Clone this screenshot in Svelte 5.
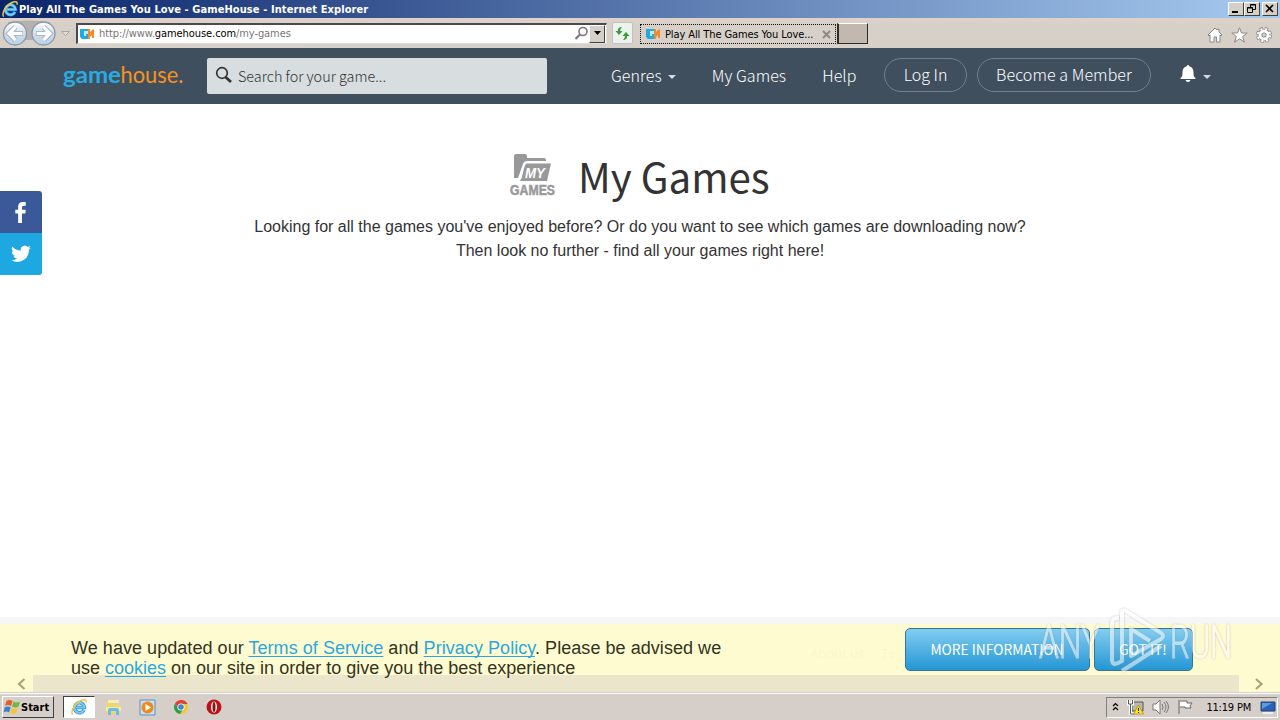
<script lang="ts">
  const address = { scheme: "http://www.", host: "gamehouse.com", path: "/my-games" };
  const navLinks = [
    { label: "Genres", menu: true },
    { label: "My Games", menu: false },
    { label: "Help", menu: false },
  ];
</script>

{#snippet ieLogo(size: number)}
  <svg width={size} height={size} viewBox="0 0 18 18">
    <path d="M14 12A5 5 0 1 1 14.500 9.500H6" fill="none" stroke="#2f83d0" stroke-width="3.400" />
    <path d="M14 12A5 5 0 1 1 14.500 9.500H6" fill="none" stroke="#74cdf7" stroke-width="2" />
    <path d="M3 16.400C0 15.500 3.500 6.500 10 3c4-2.200 7-1.800 6 1.800" fill="none" stroke="#f0c63c" stroke-width="1.500" />
  </svg>
{/snippet}

{#snippet siteIcon()}
  <svg width="14" height="12" viewBox="0 0 14 12">
    <path d="M0 1h8v2H4v5h2V6h2v5H2l-2-2z" fill="#25a9dc" />
    <path d="M8 1h2v3l2-2 2-1v9h-2V7l-2 2v2H8z" fill="#f28b2c" />
    <path d="M4 3h4v3H6v2H4z" fill="#bceaf8" />
  </svg>
{/snippet}

<div class="screen">
  <div class="title-bar">
    {@render ieLogo(18)}
    <span class="window-title">Play All The Games You Love - GameHouse - Internet Explorer</span>
    <div class="window-buttons">
      <span class="win-btn"><svg width="14" height="12"><path d="M3 9h6" stroke="#000" stroke-width="2" /></svg></span>
      <span class="win-btn restore"><svg width="14" height="12"><path d="M5.500 4V1.500h5v5H8M5 2h6M2.500 4.500h5v5h-5zM2 5h6" fill="none" stroke="#000" /></svg></span>
      <span class="win-btn"><svg width="14" height="12"><path d="m3 2 7 7M10 2 3 9" stroke="#000" stroke-width="1.600" /></svg></span>
    </div>
  </div>

  <div class="toolbar">
    <svg class="history" width="74" height="30" viewBox="0 0 74 30">
      <defs>
        <linearGradient id="orb" x2="0" y2="1">
          <stop offset="0" stop-color="#fff" />
          <stop offset=".5" stop-color="#d5dde7" />
          <stop offset="1" stop-color="#b4d3e8" />
        </linearGradient>
      </defs>
      <path d="M8 4Q29 1 50 4L44 22H14z" fill="#b4b0ad" />
      <circle cx="15" cy="15.500" r="11.500" fill="url(#orb)" stroke="#8898a8" stroke-width="1.300" />
      <circle cx="43.500" cy="15.500" r="11.500" fill="url(#orb)" stroke="#8898a8" stroke-width="1.300" />
      <path d="M23 15.500H9M15.500 9 9 15.500l6.500 6.500" fill="none" stroke="#91a6bd" stroke-width="5" />
      <path d="M22.500 15.500H9M15.500 9 9 15.500l6.500 6.500" fill="none" stroke="#fff" stroke-width="3.400" />
      <path d="M36 15.500h14M43.500 9l6.500 6.500-6.500 6.500" fill="none" stroke="#91a6bd" stroke-width="5" />
      <path d="M36.500 15.500h13M43.500 9l6.500 6.500-6.500 6.500" fill="none" stroke="#fff" stroke-width="3.400" />
      <path d="M61.500 13.500h8l-4 4z" fill="#e2dfda" stroke="#aaa69f" />
    </svg>
    <div class="address">
      {@render siteIcon()}
      <span class="url">{address.scheme}<b>{address.host}</b>{address.path}</span>
      <svg width="15" height="15" viewBox="0 0 15 15"><circle cx="9" cy="5.500" r="4" fill="none" stroke="#777" stroke-width="1.600" /><path d="M6 8.500 1.500 13" stroke="#777" stroke-width="2.200" /></svg>
      <span class="drop"><svg width="9" height="5"><path d="M1 0h7L4.500 4z" /></svg></span>
    </div>
    <span class="refresh">
      <svg width="15" height="15" viewBox="0 0 15 15">
        <path d="M7 1Q2.500 1 3 5H.5L4 9l3.500-4H5Q5 3 7 1M8 14q4.500 0 4-4h2.500L11 6l-3.500 4H10q0 2-2 4" fill="#379a38" />
      </svg>
    </span>
    <div class="tab">
      {@render siteIcon()}
      <span class="tab-title">Play All The Games You Love...</span>
      <svg width="9" height="9"><path d="m1 1 7 7M8 1 1 8" stroke="#8b8884" stroke-width="1.900" /></svg>
    </div>
    <span class="new-tab"></span>
    <div class="tools">
      <svg width="16" height="16" viewBox="0 0 16 16"><path d="M8 1 1 8l1 1 1-1v7h4v-5h2.500v5H13V8l1 1 1-1-3-3V2h-2v1z" fill="#fff" stroke="#8c8a86" /></svg>
      <svg width="17" height="16" viewBox="0 0 17 16"><path d="m8.500.8 2 5.200h5.700l-4.500 3.500 1.700 5.700-4.900-3.400-4.900 3.400 1.700-5.700L.8 6h5.700z" fill="#fff" stroke="#8c8a86" /></svg>
      <svg width="16" height="16" viewBox="0 0 16 16">
        <circle cx="8" cy="8" r="6.200" fill="none" stroke="#8c8a86" stroke-width="3.600" stroke-dasharray="3.100 1.770" />
        <circle cx="8" cy="8" r="4" fill="none" stroke="#8c8a86" stroke-width="4.600" />
        <circle cx="8" cy="8" r="5.900" fill="none" stroke="#fff" stroke-width="2.600" stroke-dasharray="1.900 2.734" stroke-dashoffset="-.5" />
        <circle cx="8" cy="8" r="4" fill="none" stroke="#fff" stroke-width="2.800" />
      </svg>
    </div>
  </div>

  <header class="site-header">
    <svg class="brand" width="124" height="34" viewBox="0 0 124 34">
      <text y="25" textLength="58" lengthAdjust="spacingAndGlyphs" class="game">game</text>
      <text x="57.500" y="25" textLength="63" lengthAdjust="spacingAndGlyphs" class="house">house.</text>
    </svg>
    <div class="search">
      <svg width="18" height="18" viewBox="0 0 18 18"><circle cx="7" cy="7" r="5.300" fill="none" stroke="#333" stroke-width="1.700" /><path d="m10.500 11 5.500 5" stroke="#333" stroke-width="2.800" /></svg>
      <span>Search for your game...</span>
    </div>
    <nav>
      {#each navLinks as link}
        <a class="nav-link" href="#top">{link.label}{#if link.menu}<i class="caret"></i>{/if}</a>
      {/each}
    </nav>
    <span class="pill login">Log In</span>
    <span class="pill member">Become a Member</span>
    <div class="bell">
      <svg width="16" height="18" viewBox="0 0 16 18"><path d="M8 0q1 0 1.200 1.200C12 2 13.500 4 13.500 7c0 4 .5 5 2 6v1H.5v-1c1.500-1 2-2 2-6 0-3 1.500-5 4.300-5.800Q7 0 8 0M5.500 15h5q-.5 2-2.500 2t-2.500-2" fill="#fff" /></svg>
      <i class="caret"></i>
    </div>
  </header>

  <main>
    <div class="heading">
      <svg width="48" height="44" viewBox="0 0 48 44">
        <path d="M4 2q0-2 2-2h9q2 0 2 2v2h17q2 0 2 3H17q-3 0-4 3L8 24H4z" fill="#999" />
        <path d="M17 9.500h24L37 27H10q2-3 3-8 1.500-9.500 4-9.500" fill="#999" />
        <text x="15" y="24" textLength="20" lengthAdjust="spacingAndGlyphs" class="folder-label">MY</text>
        <text x="0" y="40.500" textLength="45" lengthAdjust="spacingAndGlyphs" class="folder-caption">GAMES</text>
      </svg>
      <h1>My Games</h1>
    </div>
    <p>Looking for all the games you've enjoyed before? Or do you want to see which games are downloading now?<br />Then look no further - find all your games right here!</p>

    <div class="share">
      <span class="facebook"><svg width="12" height="21" viewBox="0 0 12 22"><path d="M3 22V12H0V8h3V5q0-5 5-5h3v4H9Q7 4 7 6v2h4l-.5 4H7v10z" fill="#fff" /></svg></span>
      <span class="twitter"><svg width="20" height="18" viewBox="0 0 24 20"><path d="M24 2.400a10 10 0 0 1-2.800.8A5 5 0 0 0 23.300.5a10 10 0 0 1-3.100 1.200A4.900 4.900 0 0 0 11.700 6 14 14 0 0 1 1.700.9a4.900 4.900 0 0 0 1.500 6.600A5 5 0 0 1 1 6.900a5 5 0 0 0 4 4.900 5 5 0 0 1-2.300.1 5 5 0 0 0 4.600 3.400A10 10 0 0 1 0 17.300 14 14 0 0 0 21.500 4.800 10 10 0 0 0 24 2.400" fill="#fff" /></svg></span>
    </div>
  </main>

  <div class="footer-edge"></div>
  <div class="cookie-bar">
    <div class="scrollbar">
      <svg width="10" height="12"><path d="M8.500 1 3 6l5.500 5" fill="none" stroke="#a7a477" stroke-width="2.200" /></svg>
      <span class="thumb"></span>
      <svg width="10" height="12"><path d="m2 1 5.500 5L2 11" fill="none" stroke="#a7a477" stroke-width="2.200" /></svg>
    </div>
    <div class="notice">
      <span class="lead">We have updated our <a href="#terms">Terms of Service</a> and <a href="#privacy">Privacy Policy</a>. Please be advised we</span><br />
      use <a href="#cookies">cookies</a> on our site in order to give you the best experience
    </div>
    <span class="faded-link">About us</span>
    <span class="faded-link">Te</span>
    <div class="actions">
      <button class="info">MORE INFORMATION</button>
      <button class="accept">GOT IT!</button>
    </div>
  </div>

  <svg class="watermark" width="204" height="76" viewBox="0 0 204 76">
    <text x="3" y="55" textLength="61" lengthAdjust="spacingAndGlyphs">ANY</text>
    <path d="M83 15h-2q-5 0-5 5v36q0 7 6 4l4-2V10q0-4 4-2l35 22q4 3 0 6L95 53V26l19 12" />
    <path d="M86 68l39-25" />
    <text x="134" y="55" textLength="62" lengthAdjust="spacingAndGlyphs">RUN</text>
  </svg>

  <div class="taskbar">
    <div class="start">
      <svg width="18" height="16" viewBox="0 0 17 16">
        <path d="M3 2q3-2 6 0L7.500 7q-3-2-6 0z" fill="#e45d2d" />
        <path d="M10 2.500q3 2 6.500 0L15 7.500q-3 2-6.500 0z" fill="#70b83e" />
        <path d="M1.200 8.500q3-2 6 0L5.500 13.500q-3-2-5.500 0z" fill="#3b82cb" />
        <path d="M8.200 9q3 2 6.500 0l-1.700 5q-3 2-6.300 0z" fill="#f5c43c" />
      </svg>
      Start
    </div>
    <div class="task">{@render ieLogo(18)}</div>
    <div class="shortcuts">
      <svg width="17" height="17" viewBox="0 0 17 17"><path d="M1 3h6l1 2h7v10H1z" fill="#ead577" /><path d="M3 1h11v3H3z" fill="#f8edaa" /><path d="M1 8h15v4H1z" fill="#f7eaa4" /><path d="M3 16v-5q0-2 2-2h7q2 0 2 2v5h-3v-4H6v4z" fill="#69bce5" /></svg>
      <svg width="17" height="17" viewBox="0 0 17 17"><path d="M1 1h15v15H1z" fill="#c6e1f5" stroke="#5891cc" /><circle cx="8.500" cy="8.500" r="6" fill="#f28a18" /><path d="m6.500 5 5.500 3.500L6.500 12z" fill="#fff" /></svg>
      <svg width="16" height="16" viewBox="0 0 16 16"><circle cx="8" cy="8" r="7" fill="#f4c72f" /><path d="M2 4.500A7 7 0 0 1 14.500 5H8a3 3 0 0 0-2.600 4.500z" fill="#db4437" /><path d="M2 4.500A7 7 0 0 0 7 15l3-4.800q-3 1.600-4.800-1z" fill="#289d58" /><circle cx="8" cy="8" r="3.600" fill="#fff" /><circle cx="8" cy="8" r="2.800" fill="#4285d4" /></svg>
      <svg width="16" height="16" viewBox="0 0 16 16"><circle cx="8" cy="8" r="7.500" fill="#b91519" /><ellipse cx="8" cy="8" rx="3" ry="5.600" fill="#fff" /><ellipse cx="8" cy="8" rx="1.500" ry="5" fill="#8b1013" /></svg>
    </div>
    <div class="tray">
      <svg width="8" height="10"><path d="m1 4 2.500-2.500L6 4M1 8l2.500-2.500L6 8" fill="none" stroke="#000" stroke-width="1.200" /></svg>
      <svg width="18" height="16" viewBox="0 0 18 16"><path d="M5 3h11v9H5z" fill="#b8b8b0" stroke="#555" /><path d="M1.500 1v4h4V1M3.500 5v10h4" fill="none" stroke="#fff" stroke-width="3" /><path d="M1.500 1v4h4V1M3.500 5v10h4" fill="none" stroke="#555" /><path d="m11.500 6 5 9h-10z" fill="#ffe329" stroke="#a48610" stroke-width=".7" /><path d="M11.500 9v3m0 1v1" stroke="#222" /></svg>
      <svg width="18" height="16" viewBox="0 0 18 16"><path d="M1 5h3l4-4v14l-4-4H1z" fill="#fff" stroke="#777" /><path d="M10 5q2 3 0 6m2-8q4 5 0 10m2-11q5 6 0 12" fill="none" stroke="#777" /></svg>
      <svg width="17" height="16" viewBox="0 0 17 16"><path d="M2 1v14M3 2h7v2h5l-2 3 1 2H8V8H3" fill="#fff" stroke="#666" /></svg>
      <span class="clock">11:19 PM</span>
      <svg width="16" height="13" viewBox="0 0 16 13"><path d="M1 1h14v9H1z" fill="#2862b9" stroke="#28426f" /><path d="m2 2h10L2 8z" fill="#5d9bdf" /><path d="M3 12h10" stroke="#eee" stroke-width="2" /></svg>
    </div>
  </div>
</div>

<style>
  :global(body) {
    margin: 0;
    overflow: hidden;
  }

  .screen {
    position: relative;
    width: 1280px;
    height: 720px;
    display: flex;
    flex-direction: column;
    overflow: hidden;
    background: #fff;
    font-family: "DejaVu Sans Condensed", "DejaVu Sans", sans-serif;
    font-size: 11px;
    color: #000;
  }

  svg {
    display: block;
    flex: none;
  }

  .title-bar {
    height: 18px;
    flex: none;
    display: flex;
    align-items: center;
    padding: 0 2px 0 1px;
    box-sizing: border-box;
    background: linear-gradient(90deg, #0a246a, #a6caf0);
  }

  .window-title {
    color: #fff;
    font-weight: bold;
    letter-spacing: 0.09px;
    white-space: nowrap;
  }

  .window-buttons {
    display: flex;
    margin-left: auto;
  }

  .win-btn {
    width: 14px;
    height: 12px;
    background: #d4d0c8;
    border: 1px solid;
    border-color: #fff #404040 #404040 #fff;
  }

  .restore {
    margin-right: 2px;
  }

  .toolbar {
    height: 30px;
    flex: none;
    display: flex;
    align-items: center;
    background: linear-gradient(#dfd2c8, #d6d0c8 25%);
  }

  .history {
    margin-right: 2px;
  }

  .address {
    width: 531px;
    height: 21px;
    box-sizing: border-box;
    display: flex;
    align-items: center;
    padding: 0 1px 0 2px;
    background: #fff;
    border: 1px solid;
    border-width: 2px 1px 1px 2px;
    border-color: #4d4850 #ddd #ddd #4d4850;
  }

  .url {
    margin-left: 5px;
    flex: 1;
    color: #777;
    letter-spacing: -0.08px;
  }

  .url b {
    font-weight: normal;
    color: #000;
  }

  .drop {
    width: 14px;
    height: 16px;
    display: flex;
    align-items: center;
    justify-content: center;
    background: #d4d0c8;
    border: 1px solid;
    border-color: #fff #404040 #404040 #fff;
  }

  .refresh {
    width: 19px;
    height: 20px;
    display: flex;
    align-items: center;
    justify-content: center;
    margin: 0 7px 0 5px;
    background: #edf2ef;
    border: 1px solid #bfc2c5;
    border-radius: 2px;
  }

  .tab {
    width: 196px;
    height: 20px;
    box-sizing: border-box;
    display: flex;
    align-items: center;
    padding: 0 4px 0 5px;
    margin-top: 2px;
    border: 1px dotted #111;
  }

  .tab-title {
    margin-left: 5px;
    flex: 1;
    white-space: nowrap;
    letter-spacing: -0.1px;
  }

  .new-tab {
    width: 28px;
    height: 19px;
    margin-left: 1px;
    background: #c1b9b0;
    border: 1px solid;
    border-width: 1px 1px 1px 2px;
    border-color: #fff #2d2a28 #2d2a28 #302c2a;
  }

  .tools {
    display: flex;
    gap: 8px;
    margin: 4px 8px 0 auto;
  }

  .site-header {
    height: 56px;
    flex: none;
    display: flex;
    box-sizing: border-box;
    padding: 10px 0 0 63px;
    background: #404f5e;
    color: #fff;
    font-family: "Noto Sans CJK SC", sans-serif;
    font-weight: 300;
    font-size: 16px;
  }

  .game,
  .house {
    font: bold 23.5px "Lato", sans-serif;
    fill: #29abe2;
  }

  .house {
    font-weight: 400;
    fill: #f7931e;
  }

  .search {
    width: 340px;
    height: 36px;
    margin-left: 20px;
    box-sizing: border-box;
    display: flex;
    align-items: center;
    gap: 5px;
    padding: 0 0 2px 8px;
    background: #d8dde0;
    border-radius: 2px;
    color: #333;
    font-size: 14.4px;
  }

  nav {
    display: flex;
    gap: 36px;
    width: 273px;
    margin-left: 64px;
    line-height: 34px;
  }

  .nav-link {
    color: #fff;
    text-decoration: none;
    white-space: nowrap;
    letter-spacing: 0.08px;
  }

  .caret {
    display: inline-block;
    margin-left: 6px;
    vertical-align: 3px;
    border: 4px solid transparent;
    border-top-color: #d3d9df;
    border-bottom: 0;
  }

  .pill {
    height: 34px;
    box-sizing: border-box;
    border: 1px solid #74818c;
    border-radius: 17px;
    line-height: 30px;
    text-align: center;
    white-space: nowrap;
  }

  .login {
    width: 83px;
  }

  .member {
    width: 174px;
    margin-left: 10px;
    letter-spacing: 0.08px;
  }

  .bell {
    display: flex;
    align-items: flex-start;
    margin: 7px 0 0 29px;
  }

  .bell .caret {
    margin: 10px 0 0 7px;
  }

  main {
    position: relative;
    height: 513px;
    flex: none;
    color: #333;
    text-align: center;
  }

  .heading {
    display: flex;
    align-items: flex-start;
    padding: 50px 0 0 510px;
  }

  h1 {
    margin: -11px 0 0 20px;
    font: 400 40.3px/66px "Noto Sans CJK SC", sans-serif;
    white-space: nowrap;
  }

  .folder-label {
    font: italic bold 14px "Liberation Sans", sans-serif;
    fill: #fff;
  }

  .folder-caption {
    font: bold 14px "Liberation Sans", sans-serif;
    fill: #999;
    stroke: #999;
    stroke-width: 0.5;
  }

  p {
    margin: 6px 0 0;
    font: 16px/24px "Liberation Sans", sans-serif;
  }

  .share {
    position: absolute;
    top: 87px;
    left: 0;
    width: 42px;
    border-radius: 0 3px 3px 0;
    overflow: hidden;
  }

  .share span {
    height: 42px;
    display: flex;
    align-items: center;
    justify-content: center;
  }

  .facebook {
    background: #3b5998;
  }

  .twitter {
    background: #1da8e2;
  }

  .footer-edge {
    height: 7px;
    flex: none;
    background: #f6f6f6;
  }

  .cookie-bar {
    position: relative;
    height: 68px;
    flex: none;
    display: flex;
    background: #fffbd0;
  }

  .scrollbar {
    position: absolute;
    left: 0;
    right: 0;
    bottom: 0;
    height: 17px;
    box-sizing: border-box;
    display: flex;
    align-items: center;
    padding: 0 16px;
  }

  .thumb {
    flex: 1;
    height: 17px;
    margin: 0 15px 0 7px;
    background: #ebe5cb;
  }

  .notice {
    position: relative;
    width: 810px;
    box-sizing: border-box;
    padding: 14px 0 0 71px;
    color: #333322;
    font: 18px/20px "Liberation Sans", sans-serif;
    white-space: nowrap;
  }

  .notice a {
    color: #29a8df;
    text-decoration: underline 1px;
    text-decoration-skip-ink: none;
    text-underline-offset: 2px;
  }

  .lead {
    letter-spacing: 0.05px;
  }

  .faded-link {
    width: 71px;
    margin-top: 21px;
    color: #f9f6cc;
    font: 13px/16px "Open Sans", sans-serif;
    white-space: nowrap;
  }

  .faded-link + .faded-link {
    width: 24px;
  }

  .actions {
    display: flex;
    gap: 4px;
    padding-top: 4px;
  }

  button {
    height: 43px;
    padding: 0 1px 1px 0;
    border: 1px solid #34758f;
    border-radius: 5px;
    background: linear-gradient(#83cdf1, #2496d5);
    color: #fff;
    font: 400 13.8px "Noto Sans CJK SC", sans-serif;
  }

  .info {
    width: 185px;
  }

  .accept {
    width: 99px;
  }

  .watermark {
    position: absolute;
    top: 603px;
    left: 1036px;
    fill: none;
    stroke: #fff;
    stroke-width: 4;
    stroke-linejoin: round;
    opacity: 0.55;
    filter: drop-shadow(0 0 1px #999);
  }

  .watermark text {
    font: 300 47px "Roboto", sans-serif;
    fill: #fff;
    stroke-width: 1;
  }

  .taskbar {
    height: 28px;
    flex: none;
    display: flex;
    align-items: center;
    box-sizing: border-box;
    padding: 1px 2px 0;
    border-top: 1px solid #d6d0c8;
    background: #d6cfc9;
    box-shadow: inset 0 1px #fff;
  }

  .start {
    width: 50px;
    height: 20px;
    display: flex;
    align-items: center;
    font-weight: bold;
    border: 1px solid;
    border-color: #fff #404040 #404040 #fff;
  }

  .task {
    width: 30px;
    height: 20px;
    display: flex;
    align-items: center;
    justify-content: center;
    margin-left: 9px;
    background: #fff;
    border: 1px solid;
    border-color: #404040 #fff #fff #404040;
  }

  .shortcuts {
    display: flex;
    align-items: center;
    gap: 17px;
    margin-left: 10px;
  }

  .tray {
    width: 172px;
    height: 21px;
    box-sizing: border-box;
    display: flex;
    align-items: center;
    gap: 7px;
    margin-left: auto;
    padding: 0 1px 0 5px;
    border: 1px solid;
    border-color: #808080 #fff #fff #808080;
  }

  .clock {
    margin: 0 2px 0 auto;
    white-space: nowrap;
    letter-spacing: -0.2px;
  }
</style>
